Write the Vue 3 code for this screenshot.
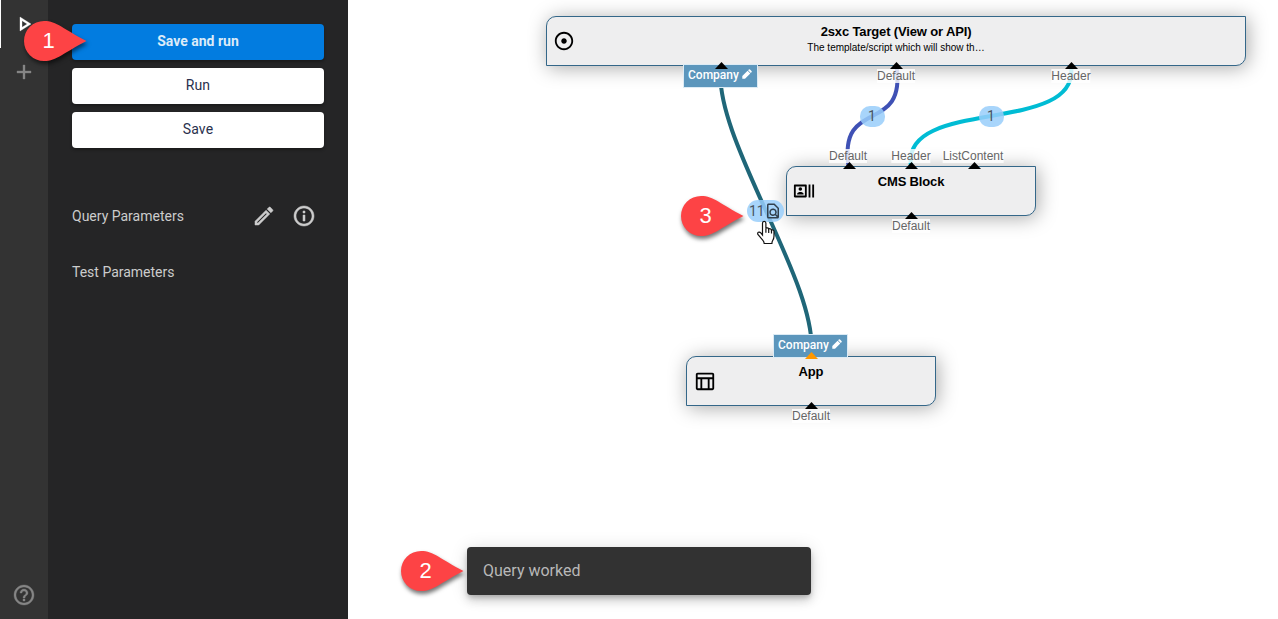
<script setup>
const buttons = [
  { text: 'Save and run', primary: true },
  { text: 'Run' },
  { text: 'Save' },
]

const nodes = [
  { id: 'target', title: '2sxc Target (View or API)', note: 'The template/script which will show th…', x: 198, y: 16, w: 700 },
  { id: 'cms', title: 'CMS Block', x: 438, y: 166, w: 250 },
  { id: 'app', title: 'App', x: 338, y: 356, w: 250 },
]

const links = [
  { color: '#1f6678', d: 'M373 66 C363 136 473 286 463 356' },
  { color: '#3f51b5', d: 'M548.5 66 C558.5 136 490.5 96 500.5 166' },
  { color: '#00bcd4', d: 'M723 66 C733 136 553 96 563 166' },
]

const labels = [
  { text: 'Default', x: 548, y: 76 },
  { text: 'Header', x: 723, y: 76 },
  { text: 'Default', x: 500, y: 156 },
  { text: 'Header', x: 563, y: 156 },
  { text: 'ListContent', x: 625, y: 156 },
  { text: 'Default', x: 563, y: 226 },
  { text: 'Default', x: 463, y: 416 },
]

const streams = [
  { text: 'Company', x: 335, y: 64 },
  { text: 'Company', x: 425, y: 334 },
]

const ports = [
  { x: 373, y: 62 },
  { x: 548, y: 62 },
  { x: 723, y: 62 },
  { x: 500.5, y: 162 },
  { x: 562.5, y: 162 },
  { x: 625.5, y: 162 },
  { x: 562.5, y: 212 },
  { x: 463, y: 352, dynamic: true },
  { x: 463, y: 402 },
]

const pins = [
  { n: 1, x: -324, y: 21 },
  { n: 2, x: 53, y: 551 },
  { n: 3, x: 333, y: 196 },
]

const at = (o) => ({ left: o.x + 'px', top: o.y + 'px' })
</script>

<template>
  <div class="app">
    <nav class="rail">
      <div class="rail-item active">
        <svg viewBox="0 0 24 24"><path d="M10 8.64 15.27 12 10 15.36V8.64M8 5v14l11-7L8 5z" /></svg>
      </div>
      <div class="rail-item">
        <svg viewBox="0 0 24 24"><path d="M19 13h-6v6h-2v-6H5v-2h6V5h2v6h6v2z" /></svg>
      </div>
      <div class="rail-item last">
        <svg viewBox="0 0 24 24"><path d="M11 18h2v-2h-2v2zm1-16C6.48 2 2 6.48 2 12s4.48 10 10 10 10-4.48 10-10S17.52 2 12 2zm0 18c-4.41 0-8-3.59-8-8s3.59-8 8-8 8 3.59 8 8-3.59 8-8 8zm0-14c-2.21 0-4 1.79-4 4h2c0-1.1.9-2 2-2s2 .9 2 2c0 2-3 1.75-3 5h2c0-2.25 3-2.5 3-5 0-2.21-1.79-4-4-4z" /></svg>
      </div>
    </nav>

    <aside class="panel">
      <button v-for="b in buttons" :key="b.text" class="btn" :class="{ primary: b.primary }">{{ b.text }}</button>
      <div class="row first">
        <span>Query Parameters</span>
        <div class="actions">
          <svg viewBox="0 0 24 24"><path d="M14.06 9.02l.92.92L5.92 19H5v-.92l9.06-9.06M17.66 3c-.25 0-.51.1-.7.29l-1.83 1.83 3.75 3.75 1.83-1.83c.39-.39.39-1.02 0-1.41l-2.34-2.34c-.2-.2-.45-.29-.71-.29zm-3.6 3.19L3 17.25V21h3.75L17.81 9.94l-3.75-3.75z" /></svg>
          <svg viewBox="0 0 24 24"><path d="M11 7h2v2h-2zm0 4h2v6h-2zm1-9C6.48 2 2 6.48 2 12s4.48 10 10 10 10-4.48 10-10S17.52 2 12 2zm0 18c-4.41 0-8-3.59-8-8s3.59-8 8-8 8 3.59 8 8-3.59 8-8 8z" /></svg>
        </div>
      </div>
      <div class="row"><span>Test Parameters</span></div>
    </aside>

    <main class="canvas">
      <div v-for="n in nodes" :key="n.id" class="node" :style="{ ...at(n), width: n.w + 'px' }">
        <svg v-if="n.id === 'target'" class="node-icon" viewBox="0 0 24 24"><path d="M12 2C6.49 2 2 6.49 2 12s4.49 10 10 10 10-4.49 10-10S17.51 2 12 2zm0 18c-4.41 0-8-3.59-8-8s3.59-8 8-8 8 3.59 8 8-3.59 8-8 8zm3-8c0 1.66-1.34 3-3 3s-3-1.34-3-3 1.34-3 3-3 3 1.34 3 3z" /></svg>
        <svg v-else-if="n.id === 'cms'" class="node-icon" viewBox="0 0 24 24"><path d="M21 5h2v14h-2zM17 5h2v14h-2zM14 5H2c-.55 0-1 .45-1 1v12c0 .55.45 1 1 1h12c.55 0 1-.45 1-1V6c0-.55-.45-1-1-1zm-1 12H3V7h10v10z" /><circle cx="8" cy="9.9" r="1.95" /><path d="M11.5 15.9v-.9c0-1.2-2.3-1.9-3.5-1.9s-3.5.7-3.5 1.9v.9h7z" /></svg>
        <svg v-else class="node-icon table" viewBox="0 0 24 24"><path d="M20 3H4c-1.1 0-2 .9-2 2v15c0 1.1.9 2 2 2h16c1.1 0 2-.9 2-2V5c0-1.1-.9-2-2-2zm0 2v3H4V5h16zm-5 15H9V10h6v10zM4 10h3v10H4V10zm13 10V10h3v10h-3z" /></svg>
        <div class="title">{{ n.title }}</div>
        <div v-if="n.note" class="note">{{ n.note }}</div>
      </div>

      <svg class="wires" viewBox="0 0 930 619">
        <path v-for="l in links" :key="l.color" :d="l.d" :stroke="l.color" />
      </svg>

      <span v-for="(l, i) in labels" :key="'l' + i" class="label" :style="at(l)">{{ l.text }}</span>

      <span v-for="(s, i) in streams" :key="'s' + i" class="stream" :style="at(s)">
        {{ s.text }}
        <svg viewBox="0 0 10 10"><path d="M.3 7 5.600 1.700 8.300 4.400 3 9.700H.3zM6.100 1.200l.7-.7q.6-.6 1.200 0l1.500 1.500q.6.600 0 1.200l-.7.7z" /></svg>
      </span>

      <svg v-for="(p, i) in ports" :key="'p' + i" class="port" :class="{ dynamic: p.dynamic }" :style="at(p)" viewBox="0 0 13 7">
        <path d="M6.5 0 13 7H0z" />
      </svg>

      <span class="count one-a">1</span>
      <span class="count one-b">1</span>
      <span class="count inspect">
        11
        <svg viewBox="0 0 24 24"><path d="M13.17 4 18 8.83v9.3l-1.8-1.8a5 5 0 1 0-1.4 1.4L17.08 20H6V4h7.17M14 2H6c-1.1 0-2 .9-2 2v16c0 1.1.9 2 2 2h12c1.1 0 2-.9 2-2V8l-6-6zm-2 8.5a3 3 0 1 1 0 6 3 3 0 0 1 0-6z" /></svg>
      </span>

      <svg class="hand" viewBox="0 0 20 25">
        <path d="M6.5 15V3.2q0-1.900 1.700-1.900t1.700 1.900v5.300q.3-.8 1.500-.6 1.300.2 1.300 1.300.5-.7 1.600-.4 1.200.3 1.200 1.300.5-.5 1.500-.1 1 .4 1 1.500V16q0 2.500-1.300 4.500-.8 1.300-.8 3H8.200q-.1-1.700-1.500-3.300L2.300 15q-1.300-1.900 0-2.700 1.300-.8 2.500.6z" />
        <path d="M9.900 8.500v4.300M12.700 9.200v3.900M15.500 10v3.400" />
      </svg>

      <div class="snackbar">Query worked</div>

      <div v-for="p in pins" :key="p.n" class="pin" :style="at(p)">
        <svg viewBox="0 0 63 40"><path d="M20 0C33 0 39 8 62.500 20 39 32 33 40 20 40A20 20 0 0 1 20 0z" /></svg>
        <span>{{ p.n }}</span>
      </div>
    </main>
  </div>
</template>

<style>
body {
  margin: 0;
  overflow: hidden;
}
</style>

<style scoped>
.app {
  display: flex;
  height: 619px;
  background: #fff;
  font-family: Roboto, sans-serif;
}
svg {
  display: block;
}
.rail {
  width: 48px;
  display: flex;
  flex-direction: column;
  background: #333;
}
.rail-item {
  box-sizing: border-box;
  height: 48px;
  display: flex;
  align-items: center;
  justify-content: center;
}
.rail-item svg {
  width: 24px;
  height: 24px;
  fill: #858585;
  stroke: #858585;
  stroke-width: 0.35;
}
.rail-item.active {
  box-shadow: inset 1px 0 #fff;
}
.rail-item.active svg {
  fill: #fff;
  stroke: #fff;
}
.rail-item.last {
  margin-top: auto;
}
.panel {
  box-sizing: border-box;
  width: 300px;
  padding: 24px;
  display: flex;
  flex-direction: column;
  background: #252526;
  color: #ccc;
  font-size: 14px;
}
.btn {
  height: 36px;
  margin: 0 0 8px;
  padding: 0 0 2px;
  border: 0;
  border-radius: 4px;
  background: #fff;
  color: #29304d;
  font: 400 14px Roboto, sans-serif;
  letter-spacing: 0.1px;
  box-shadow: 0 2px 3px rgba(0, 0, 0, 0.3);
}
.btn.primary {
  background: #027ce0;
  color: #dcebf8;
  font-weight: 700;
  letter-spacing: 0;
}
.row {
  height: 40px;
  margin-bottom: 16px;
  display: flex;
  align-items: center;
  justify-content: space-between;
}
.row.first {
  margin-top: 40px;
}
.actions {
  display: flex;
  gap: 16px;
  padding-right: 8px;
}
.actions svg {
  width: 24px;
  height: 24px;
  fill: #ccc;
  stroke: #ccc;
  stroke-width: 0.5;
}
.canvas {
  position: relative;
  flex: 1;
}
.node {
  position: absolute;
  box-sizing: border-box;
  height: 50px;
  padding-top: 7px;
  border: 1px solid #346789;
  border-radius: 10px 0 10px 0;
  background: #eeeeef;
  box-shadow: 2px 2px 19px #aaa;
  text-align: center;
  color: #000;
  font-family: "Liberation Sans", Arial, sans-serif;
}
.title {
  font-size: 13px;
  line-height: 15px;
  font-weight: 700;
  letter-spacing: -0.15px;
}
.note {
  font-size: 10px;
  line-height: 17px;
}
.node-icon {
  position: absolute;
  left: 6px;
  top: 13px;
  width: 22px;
  height: 22px;
}
.node-icon.table {
  left: 7px;
  top: 12.5px;
}
.wires {
  position: absolute;
  inset: 0;
  width: 930px;
  height: 619px;
  fill: none;
  stroke-width: 4;
}
.label {
  position: absolute;
  transform: translate(-50%, -50%);
  height: 14px;
  line-height: 14px;
  background: rgba(255, 255, 255, 0.8);
  color: #666;
  font-family: "Liberation Sans", Arial, sans-serif;
  font-size: 12px;
}
.stream {
  position: absolute;
  box-sizing: border-box;
  width: 75px;
  height: 24px;
  padding: 0 5px 2px 4px;
  display: flex;
  align-items: center;
  justify-content: space-between;
  border: 1px solid #dcebf5;
  background: #5c96bc;
  color: #fff;
  font-size: 12px;
  font-weight: 500;
}
.stream svg {
  width: 10px;
  height: 10px;
  margin-bottom: 2px;
  fill: #fff;
}
.port {
  position: absolute;
  width: 13px;
  height: 7px;
  margin-left: -6px;
}
.port.dynamic {
  fill: #ff9800;
}
.count {
  position: absolute;
  box-sizing: border-box;
  height: 21px;
  display: flex;
  align-items: center;
  justify-content: center;
  border-radius: 10px;
  background: rgba(153, 206, 250, 0.85);
  color: #4b5560;
  font-size: 14px;
}
.one-a {
  left: 511.5px;
  top: 105.5px;
  width: 25px;
}
.one-b {
  left: 630.5px;
  top: 105.5px;
  width: 25px;
}
.inspect {
  left: 399px;
  top: 200px;
  width: 37px;
  height: 22px;
  border-radius: 11px;
  justify-content: flex-start;
  padding-left: 2px;
}
.inspect svg {
  width: 18px;
  height: 18px;
  margin-left: -0.5px;
  fill: #32414e;
}
.hand {
  position: absolute;
  left: 408px;
  top: 220px;
  width: 20px;
  height: 25px;
  fill: #fff;
  stroke: #111;
  stroke-width: 1.2;
}
.snackbar {
  position: absolute;
  left: 119px;
  top: 547px;
  box-sizing: border-box;
  width: 344px;
  height: 48px;
  padding: 0 16px 2px;
  display: flex;
  align-items: center;
  border-radius: 4px;
  background: #323232;
  color: #b8b8b8;
  font-size: 16px;
  box-shadow: 0 3px 5px -1px rgba(0, 0, 0, 0.2), 0 6px 10px rgba(0, 0, 0, 0.14), 0 1px 18px rgba(0, 0, 0, 0.12);
}
.pin {
  position: absolute;
  width: 63px;
  height: 40px;
}
.pin svg {
  width: 63px;
  height: 40px;
  overflow: visible;
  fill: #fd4345;
  filter: drop-shadow(1px 3px 2px rgba(0, 0, 0, 0.55));
}
.pin span {
  position: absolute;
  left: 0;
  top: 0;
  width: 49px;
  line-height: 39px;
  text-align: center;
  color: #fff;
  font-family: "Liberation Sans", Arial, sans-serif;
  font-size: 22px;
}
</style>
